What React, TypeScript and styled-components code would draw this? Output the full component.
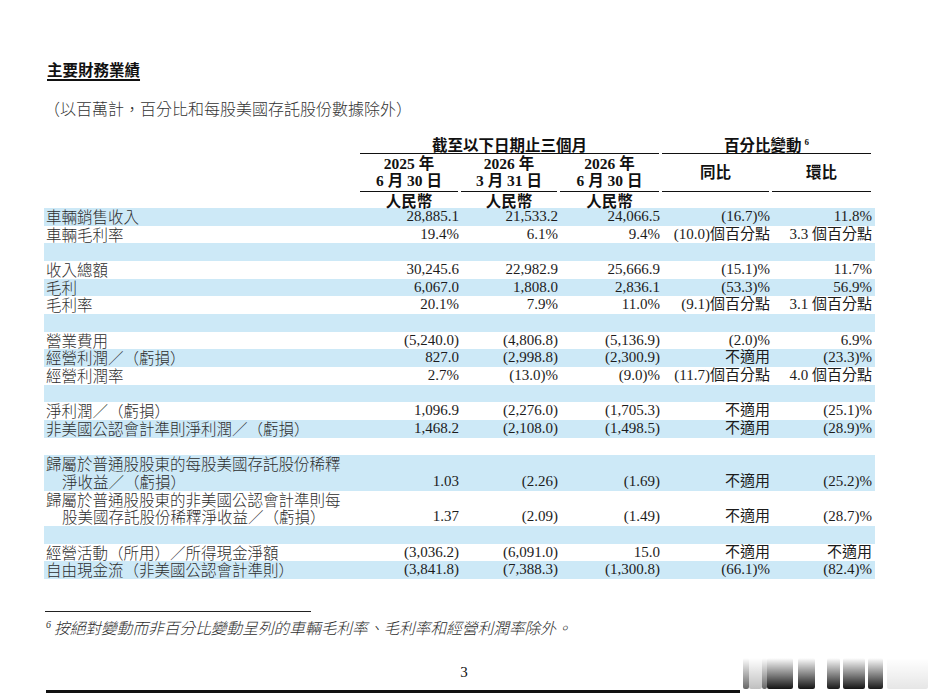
import React from 'react';
import styled, { createGlobalStyle } from 'styled-components';

const GlobalStyle = createGlobalStyle`
  html, body { margin: 0; padding: 0; background: #ffffff; }
  body {
    font-family: "Liberation Serif", "Noto Sans CJK TC", serif;
    color: #1a1a1a;
  }
`;

const COLS = '316px 99px 99px 102px 110px 102px';
const ROW_H = 17.67;
const SHADE = '#cde9f7';

const Page = styled.div`
  position: relative;
  width: 938px;
  height: 700px;
  box-sizing: border-box;
  padding: 60px 0 0 44px;
  overflow: hidden;
`;

const Title = styled.h1`
  margin: 0 0 0 3px;
  font-family: "Noto Sans CJK TC", sans-serif;
  font-weight: 700;
  font-size: 15.5px;
  line-height: 18px;
  height: 18px;
  color: #111;
  text-decoration: underline;
  text-underline-offset: 3px;
  text-decoration-thickness: 1.5px;
`;

const Subtitle = styled.p`
  margin: 20px 0 0 0;
  font-family: "Noto Sans CJK TC", sans-serif;
  font-weight: 300;
  font-size: 16px;
  line-height: 20px;
  height: 20px;
  color: #333;
`;

const Table = styled.div`
  margin-top: 18px;
  width: 831px;
`;

const HeadRow = styled.div<{ $h: number }>`
  display: grid;
  grid-template-columns: ${COLS};
  padding-right: 3px;
  height: ${(p) => p.$h}px;
  font-weight: 700;
  font-size: 15.5px;
  line-height: 17.5px;
  color: #111;
`;

const HeadCell = styled.div<{ $span?: string; $rule?: boolean; $first?: boolean; $pad?: string }>`
  grid-column: ${(p) => p.$span ?? 'auto'};
  display: flex;
  flex-direction: column;
  justify-content: center;
  align-items: center;
  text-align: center;
  box-sizing: border-box;
  padding: ${(p) => p.$pad ?? '0'};
  margin-left: ${(p) => (p.$first ? '0' : '2px')};
  margin-right: 1px;
  border-bottom: ${(p) => (p.$rule ? '1px solid #111' : '1px solid transparent')};
`;

const HeadLine = styled.span`
  display: block;
  height: 17px;
  white-space: nowrap;
`;

const HeadCjk = styled.span`
  font-family: "Noto Sans CJK TC", sans-serif;
  font-weight: 700;
`;

const Sup = styled.sup`
  font-family: "Liberation Serif", serif;
  font-size: 9px;
  line-height: 0;
  vertical-align: 6px;
  margin-left: 3px;
`;

const Row = styled.div<{ $shade: boolean; $lines: number }>`
  display: grid;
  grid-template-columns: ${COLS};
  padding-right: 3px;
  align-items: end;
  height: ${(p) => p.$lines * ROW_H}px;
  background: ${(p) => (p.$shade ? SHADE : 'transparent')};
  line-height: ${ROW_H}px;
`;

const Label = styled.div`
  font-family: "Noto Sans CJK TC", sans-serif;
  font-weight: 300;
  font-size: 15.5px;
  color: #2e2e2e;
  padding-left: 18px;
  text-indent: -16px;
  white-space: nowrap;
`;

const Num = styled.div`
  font-family: "Liberation Serif", "Noto Sans CJK TC", serif;
  font-size: 15px;
  height: ${ROW_H}px;
  text-align: right;
  white-space: nowrap;
  color: #1c1c1c;
`;

const FootRule = styled.div`
  margin: 32px 0 0 1px;
  width: 266px;
  height: 1px;
  background: #222;
`;

const Footnote = styled.p`
  margin: 6px 0 0 2px;
  font-family: "Noto Sans CJK TC", sans-serif;
  font-weight: 300;
  font-style: italic;
  font-size: 15.7px;
  line-height: 20px;
  height: 20px;
  color: #2e2e2e;
`;

const FootSup = styled.sup`
  font-family: "Liberation Serif", serif;
  font-style: italic;
  font-size: 10px;
  line-height: 0;
  vertical-align: 6px;
  margin-right: 3px;
`;

const PageNum = styled.div`
  width: 840px;
  margin-top: 25px;
  text-align: center;
  font-size: 15px;
  line-height: 18px;
  height: 18px;
  color: #111;
`;

const BottomRule = styled.div`
  margin: 9px 0 0 2px;
  width: 846px;
  height: 3px;
  background: #111;
`;

const Watermark = styled.svg`
  position: absolute;
  left: 740px;
  top: 653px;
`;

type DataRow = { label: string[]; v: string[] } | null;

const rows: DataRow[] = [
  { label: ['車輛銷售收入'], v: ['28,885.1', '21,533.2', '24,066.5', '(16.7)%', '11.8%'] },
  { label: ['車輛毛利率'], v: ['19.4%', '6.1%', '9.4%', '(10.0)個百分點', '3.3 個百分點'] },
  null,
  { label: ['收入總額'], v: ['30,245.6', '22,982.9', '25,666.9', '(15.1)%', '11.7%'] },
  { label: ['毛利'], v: ['6,067.0', '1,808.0', '2,836.1', '(53.3)%', '56.9%'] },
  { label: ['毛利率'], v: ['20.1%', '7.9%', '11.0%', '(9.1)個百分點', '3.1 個百分點'] },
  null,
  { label: ['營業費用'], v: ['(5,240.0)', '(4,806.8)', '(5,136.9)', '(2.0)%', '6.9%'] },
  { label: ['經營利潤／（虧損）'], v: ['827.0', '(2,998.8)', '(2,300.9)', '不適用', '(23.3)%'] },
  { label: ['經營利潤率'], v: ['2.7%', '(13.0)%', '(9.0)%', '(11.7)個百分點', '4.0 個百分點'] },
  null,
  { label: ['淨利潤／（虧損）'], v: ['1,096.9', '(2,276.0)', '(1,705.3)', '不適用', '(25.1)%'] },
  { label: ['非美國公認會計準則淨利潤／（虧損）'], v: ['1,468.2', '(2,108.0)', '(1,498.5)', '不適用', '(28.9)%'] },
  null,
  {
    label: ['歸屬於普通股股東的每股美國存託股份稀釋', '淨收益／（虧損）'],
    v: ['1.03', '(2.26)', '(1.69)', '不適用', '(25.2)%'],
  },
  {
    label: ['歸屬於普通股股東的非美國公認會計準則每', '股美國存託股份稀釋淨收益／（虧損）'],
    v: ['1.37', '(2.09)', '(1.49)', '不適用', '(28.7)%'],
  },
  null,
  { label: ['經營活動（所用）／所得現金淨額'], v: ['(3,036.2)', '(6,091.0)', '15.0', '不適用', '不適用'] },
  { label: ['自由現金流（非美國公認會計準則）'], v: ['(3,841.8)', '(7,388.3)', '(1,300.8)', '(66.1)%', '(82.4)%'] },
];

const dates: [string, string, string][] = [
  ['2025', '6', '30'],
  ['2026', '3', '31'],
  ['2026', '6', '30'],
];

const marks: { x: number; w: number; o: number }[] = [
  { x: 3, w: 6, o: 0.6 },
  { x: 9, w: 13, o: 0.25 },
  { x: 22, w: 5, o: 0.6 },
  { x: 27, w: 26, o: 0.92 },
  { x: 58, w: 17, o: 0.92 },
  { x: 87, w: 13, o: 0.9 },
  { x: 103, w: 22, o: 0.92 },
  { x: 128, w: 15, o: 0.9 },
  { x: 147, w: 41, o: 0.1 },
];

export default function App() {
  return (
    <Page>
      <GlobalStyle />
      <Title>主要財務業績</Title>
      <Subtitle>（以百萬計，百分比和每股美國存託股份數據除外）</Subtitle>
      <Table>
        <HeadRow $h={18}>
          <HeadCell $span="2 / 5" $rule $first>
            <HeadLine>
              <HeadCjk>截至以下日期止三個月</HeadCjk>
            </HeadLine>
          </HeadCell>
          <HeadCell $span="5 / 7" $rule>
            <HeadLine>
              <HeadCjk>百分比變動</HeadCjk>
              <Sup>6</Sup>
            </HeadLine>
          </HeadCell>
        </HeadRow>
        <HeadRow $h={36}>
          <div />
          {dates.map(([y, m, d], i) => (
            <HeadCell key={y + m} $rule $first={i === 0} $pad="0 0 3px">
              <HeadLine>
                {y} <HeadCjk>年</HeadCjk>
              </HeadLine>
              <HeadLine>
                {m} <HeadCjk>月</HeadCjk> {d} <HeadCjk>日</HeadCjk>
              </HeadLine>
            </HeadCell>
          ))}
          <HeadCell $rule $pad="0 0 2px">
            <HeadLine>
              <HeadCjk>同比</HeadCjk>
            </HeadLine>
          </HeadCell>
          <HeadCell $rule $pad="0 0 2px">
            <HeadLine>
              <HeadCjk>環比</HeadCjk>
            </HeadLine>
          </HeadCell>
        </HeadRow>
        <HeadRow $h={18}>
          <div />
          {dates.map((d, i) => (
            <HeadCell key={i} $first={i === 0} $pad="2px 0 0">
              <HeadLine>
                <HeadCjk>人民幣</HeadCjk>
              </HeadLine>
            </HeadCell>
          ))}
        </HeadRow>
        {rows.map((r, i) => {
          const shade = i % 2 === 0;
          if (!r) return <Row key={i} $shade={shade} $lines={1} />;
          return (
            <Row key={i} $shade={shade} $lines={r.label.length}>
              <Label>
                {r.label.map((l, j) => (
                  <React.Fragment key={j}>
                    {j > 0 && <br />}
                    {l}
                  </React.Fragment>
                ))}
              </Label>
              {r.v.map((v, j) => (
                <Num key={j}>{v}</Num>
              ))}
            </Row>
          );
        })}
      </Table>
      <FootRule />
      <Footnote>
        <FootSup>6</FootSup>按絕對變動而非百分比變動呈列的車輛毛利率、毛利率和經營利潤率除外。
      </Footnote>
      <PageNum>3</PageNum>
      <BottomRule />
      <Watermark width="195" height="42" viewBox="0 0 195 42">
        <defs>
          <linearGradient id="wm" x1="0" y1="0" x2="0" y2="1">
            <stop offset="0" stopColor="#000" stopOpacity="0" />
            <stop offset="0.35" stopColor="#000" stopOpacity="0.35" />
            <stop offset="1" stopColor="#000" stopOpacity="1" />
          </linearGradient>
        </defs>
        <rect x="0" y="0" width="195" height="42" fill="#ffffff" />
        {marks.map((m, i) => (
          <rect key={i} x={m.x} y="5" width={m.w} height="31" rx="2" fill="url(#wm)" opacity={m.o} />
        ))}
      </Watermark>
    </Page>
  );
}
